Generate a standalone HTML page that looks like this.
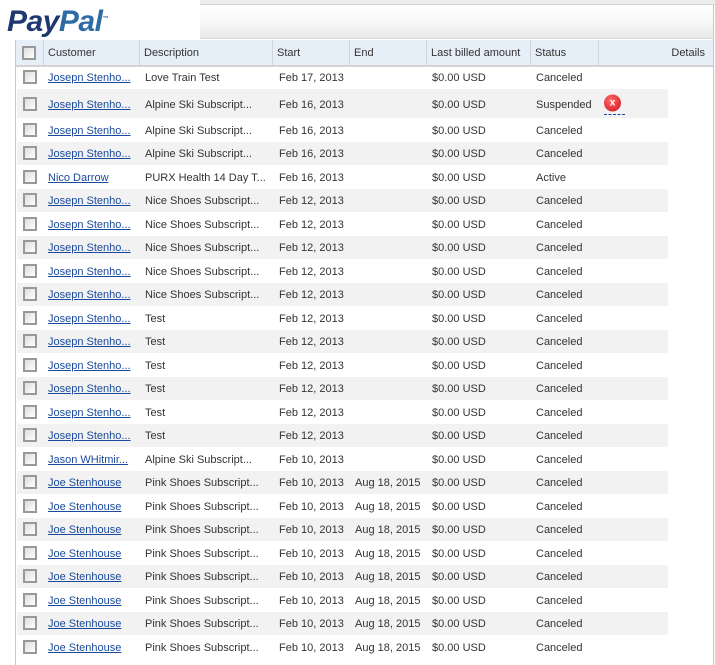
<!DOCTYPE html>
<html><head><style>
body{margin:0;width:715px;height:651px;overflow:hidden;background:#fff;font-family:"Liberation Sans",Arial,sans-serif;font-size:11px;color:#333;position:relative}
.topg{position:absolute;left:0;top:0;width:715px;height:4px;background:#ececec;border-bottom:1px solid #d6d6d6}
.tool{position:absolute;left:16px;top:5px;width:697px;height:33px;background:linear-gradient(#fff,#f6f6f6 60%,#e9e9e9);border-bottom:1px solid #d8d8d8}
.frame{position:absolute;left:15px;top:5px;width:697px;height:660px;border-left:1px solid #c8c8c8;border-right:1px solid #c8c8c8}
.logo{position:absolute;left:0;top:0;width:200px;height:40px;background:#fff}
.logo span{position:absolute;left:7px;top:5px;font:italic bold 30px "Liberation Sans",Arial,sans-serif;letter-spacing:-0.5px}
.hdr{position:absolute;left:16px;top:40px;width:697px;height:25px;background:#e6eef8;border-bottom:2px solid #d4d4d4}
.hdr div{position:absolute;top:0;height:25px;line-height:27px;border-left:1px solid #cfd5dc;padding-left:4px;color:#333}
.r{position:absolute;left:16px;width:697px}
.r.g::before{content:"";position:absolute;left:1px;top:0;bottom:0;width:651px;background:#f2f2f2}
.r span{position:absolute;top:50%;margin-top:1px;transform:translateY(-50%);white-space:nowrap}
.cb{position:absolute;left:7px;top:50%;margin-top:-7px;width:10px;height:10px;border:2px solid #999;background:linear-gradient(135deg,#ddd,#fff)}
.c1{left:32px;color:#1a4a9c;text-decoration:underline}
.c2{left:129px}.c3{left:263px}.c4{left:339px}.c5{left:416px}.c6{left:520px}
</style></head><body>
<div class="topg"></div>
<div class="tool"></div>
<div class="frame"></div>
<div class="hdr">
<div style="left:0;border:0;width:20px"><span class="cb" style="left:6px;top:13px"></span></div>
<div style="left:27px">Customer</div>
<div style="left:123px">Description</div>
<div style="left:256px">Start</div>
<div style="left:333px">End</div>
<div style="left:410px">Last billed amount</div>
<div style="left:514px">Status</div>
<div style="left:582px;width:102px;text-align:right">Details</div>
</div>
<div class="logo"><span><span style="position:static;color:#1f3870">Pay</span><span style="position:static;color:#2e6aa6">Pal</span><sup style="font-size:6px;color:#2e6aa6">™</sup></span></div>

<div class="r" style="top:65px;height:24px"><i class="cb"></i><span class="c1">Josepn Stenho...</span><span class="c2">Love Train Test</span><span class="c3">Feb 17, 2013</span><span class="c5">$0.00 USD</span><span class="c6">Canceled</span></div>
<div class="r g" style="top:89px;height:29px"><i class="cb"></i><span class="c1">Joseph Stenho...</span><span class="c2">Alpine Ski Subscript...</span><span class="c3">Feb 16, 2013</span><span class="c5">$0.00 USD</span><span class="c6">Suspended</span><span style="left:588px;width:17px;height:17px;border-radius:50%;background:radial-gradient(circle at 40% 35%,#ff6b6b,#d0101a);color:#fff;font-weight:bold;font-size:10px;text-align:center;line-height:17px;margin-top:-1px">x</span><span style="left:588px;top:auto;bottom:3px;transform:none;width:21px;border-bottom:1px dashed #1a4a9c"></span></div>
<div class="r" style="top:118px;height:23.5px"><i class="cb"></i><span class="c1">Josepn Stenho...</span><span class="c2">Alpine Ski Subscript...</span><span class="c3">Feb 16, 2013</span><span class="c5">$0.00 USD</span><span class="c6">Canceled</span></div>
<div class="r g" style="top:141.5px;height:23.5px"><i class="cb"></i><span class="c1">Josepn Stenho...</span><span class="c2">Alpine Ski Subscript...</span><span class="c3">Feb 16, 2013</span><span class="c5">$0.00 USD</span><span class="c6">Canceled</span></div>
<div class="r" style="top:165px;height:23.5px"><i class="cb"></i><span class="c1">Nico Darrow</span><span class="c2">PURX Health 14 Day T...</span><span class="c3">Feb 16, 2013</span><span class="c5">$0.00 USD</span><span class="c6">Active</span></div>
<div class="r g" style="top:188.5px;height:23.5px"><i class="cb"></i><span class="c1">Josepn Stenho...</span><span class="c2">Nice Shoes Subscript...</span><span class="c3">Feb 12, 2013</span><span class="c5">$0.00 USD</span><span class="c6">Canceled</span></div>
<div class="r" style="top:212px;height:23.5px"><i class="cb"></i><span class="c1">Josepn Stenho...</span><span class="c2">Nice Shoes Subscript...</span><span class="c3">Feb 12, 2013</span><span class="c5">$0.00 USD</span><span class="c6">Canceled</span></div>
<div class="r g" style="top:235.5px;height:23.5px"><i class="cb"></i><span class="c1">Josepn Stenho...</span><span class="c2">Nice Shoes Subscript...</span><span class="c3">Feb 12, 2013</span><span class="c5">$0.00 USD</span><span class="c6">Canceled</span></div>
<div class="r" style="top:259px;height:23.5px"><i class="cb"></i><span class="c1">Josepn Stenho...</span><span class="c2">Nice Shoes Subscript...</span><span class="c3">Feb 12, 2013</span><span class="c5">$0.00 USD</span><span class="c6">Canceled</span></div>
<div class="r g" style="top:282.5px;height:23.5px"><i class="cb"></i><span class="c1">Josepn Stenho...</span><span class="c2">Nice Shoes Subscript...</span><span class="c3">Feb 12, 2013</span><span class="c5">$0.00 USD</span><span class="c6">Canceled</span></div>
<div class="r" style="top:306px;height:23.5px"><i class="cb"></i><span class="c1">Josepn Stenho...</span><span class="c2">Test</span><span class="c3">Feb 12, 2013</span><span class="c5">$0.00 USD</span><span class="c6">Canceled</span></div>
<div class="r g" style="top:329.5px;height:23.5px"><i class="cb"></i><span class="c1">Josepn Stenho...</span><span class="c2">Test</span><span class="c3">Feb 12, 2013</span><span class="c5">$0.00 USD</span><span class="c6">Canceled</span></div>
<div class="r" style="top:353px;height:23.5px"><i class="cb"></i><span class="c1">Josepn Stenho...</span><span class="c2">Test</span><span class="c3">Feb 12, 2013</span><span class="c5">$0.00 USD</span><span class="c6">Canceled</span></div>
<div class="r g" style="top:376.5px;height:23.5px"><i class="cb"></i><span class="c1">Josepn Stenho...</span><span class="c2">Test</span><span class="c3">Feb 12, 2013</span><span class="c5">$0.00 USD</span><span class="c6">Canceled</span></div>
<div class="r" style="top:400px;height:23.5px"><i class="cb"></i><span class="c1">Josepn Stenho...</span><span class="c2">Test</span><span class="c3">Feb 12, 2013</span><span class="c5">$0.00 USD</span><span class="c6">Canceled</span></div>
<div class="r g" style="top:423.5px;height:23.5px"><i class="cb"></i><span class="c1">Josepn Stenho...</span><span class="c2">Test</span><span class="c3">Feb 12, 2013</span><span class="c5">$0.00 USD</span><span class="c6">Canceled</span></div>
<div class="r" style="top:447px;height:23.5px"><i class="cb"></i><span class="c1">Jason WHitmir...</span><span class="c2">Alpine Ski Subscript...</span><span class="c3">Feb 10, 2013</span><span class="c5">$0.00 USD</span><span class="c6">Canceled</span></div>
<div class="r g" style="top:470.5px;height:23.5px"><i class="cb"></i><span class="c1">Joe Stenhouse</span><span class="c2">Pink Shoes Subscript...</span><span class="c3">Feb 10, 2013</span><span class="c4">Aug 18, 2015</span><span class="c5">$0.00 USD</span><span class="c6">Canceled</span></div>
<div class="r" style="top:494px;height:23.5px"><i class="cb"></i><span class="c1">Joe Stenhouse</span><span class="c2">Pink Shoes Subscript...</span><span class="c3">Feb 10, 2013</span><span class="c4">Aug 18, 2015</span><span class="c5">$0.00 USD</span><span class="c6">Canceled</span></div>
<div class="r g" style="top:517.5px;height:23.5px"><i class="cb"></i><span class="c1">Joe Stenhouse</span><span class="c2">Pink Shoes Subscript...</span><span class="c3">Feb 10, 2013</span><span class="c4">Aug 18, 2015</span><span class="c5">$0.00 USD</span><span class="c6">Canceled</span></div>
<div class="r" style="top:541px;height:23.5px"><i class="cb"></i><span class="c1">Joe Stenhouse</span><span class="c2">Pink Shoes Subscript...</span><span class="c3">Feb 10, 2013</span><span class="c4">Aug 18, 2015</span><span class="c5">$0.00 USD</span><span class="c6">Canceled</span></div>
<div class="r g" style="top:564.5px;height:23.5px"><i class="cb"></i><span class="c1">Joe Stenhouse</span><span class="c2">Pink Shoes Subscript...</span><span class="c3">Feb 10, 2013</span><span class="c4">Aug 18, 2015</span><span class="c5">$0.00 USD</span><span class="c6">Canceled</span></div>
<div class="r" style="top:588px;height:23.5px"><i class="cb"></i><span class="c1">Joe Stenhouse</span><span class="c2">Pink Shoes Subscript...</span><span class="c3">Feb 10, 2013</span><span class="c4">Aug 18, 2015</span><span class="c5">$0.00 USD</span><span class="c6">Canceled</span></div>
<div class="r g" style="top:611.5px;height:23.5px"><i class="cb"></i><span class="c1">Joe Stenhouse</span><span class="c2">Pink Shoes Subscript...</span><span class="c3">Feb 10, 2013</span><span class="c4">Aug 18, 2015</span><span class="c5">$0.00 USD</span><span class="c6">Canceled</span></div>
<div class="r" style="top:635px;height:23.5px"><i class="cb"></i><span class="c1">Joe Stenhouse</span><span class="c2">Pink Shoes Subscript...</span><span class="c3">Feb 10, 2013</span><span class="c4">Aug 18, 2015</span><span class="c5">$0.00 USD</span><span class="c6">Canceled</span></div>
</body></html>
